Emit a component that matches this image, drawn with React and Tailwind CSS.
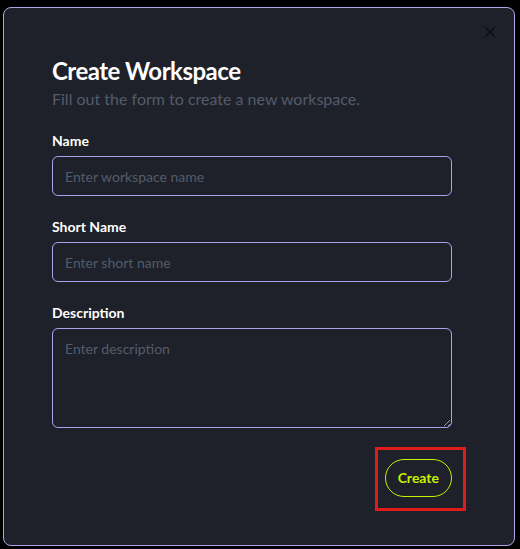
import React from "react";

const fieldClass =
  "w-full rounded-md border border-[#a9a4ec] bg-transparent px-3 text-sm text-gray-100 placeholder:text-[#535c6b] outline-none";

const Field = ({ label, placeholder, multiline = false }) => (
  <div className="flex flex-col gap-[5px]">
    <label className="text-sm font-bold leading-5 text-white">{label}</label>
    {multiline ? (
      <textarea
        placeholder={placeholder}
        className={`${fieldClass} h-[100px] py-2 leading-6`}
      />
    ) : (
      <input
        type="text"
        placeholder={placeholder}
        className={`${fieldClass} h-10`}
      />
    )}
  </div>
);

export default function App() {
  return (
    <div
      className="h-[549px] w-[520px] overflow-hidden bg-black pl-[3px] pt-[7px]"
      style={{ fontFamily: 'Lato, "Noto Sans", sans-serif' }}
    >
      <div className="relative h-[539px] w-[512px] rounded-lg border border-[#a9a4ec] bg-[#1e2129] px-12 pt-[47px]">
        {/* Close button */}
        <button className="absolute right-[12px] top-[12px] flex h-6 w-6 items-center justify-center text-[#0c0e12]">
          <svg width="12" height="12" viewBox="0 0 12 12" fill="none" stroke="currentColor" strokeWidth="1.5">
            <path d="M1 1l10 10M11 1L1 11" />
          </svg>
        </button>

        <div className="w-[400px]">
          <h2 className="text-2xl font-bold leading-8 tracking-[-0.5px] text-white">Create Workspace</h2>
          <p className="text-base leading-6 text-[#535c6b]">Fill out the form to create a new workspace.</p>

          <div className="mt-5 flex flex-col gap-[21px]">
            <Field label="Name" placeholder="Enter workspace name" />
            <Field label="Short Name" placeholder="Enter short name" />
            <Field label="Description" placeholder="Enter description" multiline />
          </div>

          <div className="mt-[31px] flex justify-end">
            <div className="relative">
              <button className="h-[38px] rounded-full border border-[#c8f000] px-3 text-sm font-bold text-[#c8f000]">
                Create
              </button>
              {/* highlight frame */}
              <div className="pointer-events-none absolute -bottom-[14px] -left-[10px] -right-[14px] -top-[12px] border-[3px] border-[#e01b1b]" />
            </div>
          </div>
        </div>
      </div>
    </div>
  );
}
